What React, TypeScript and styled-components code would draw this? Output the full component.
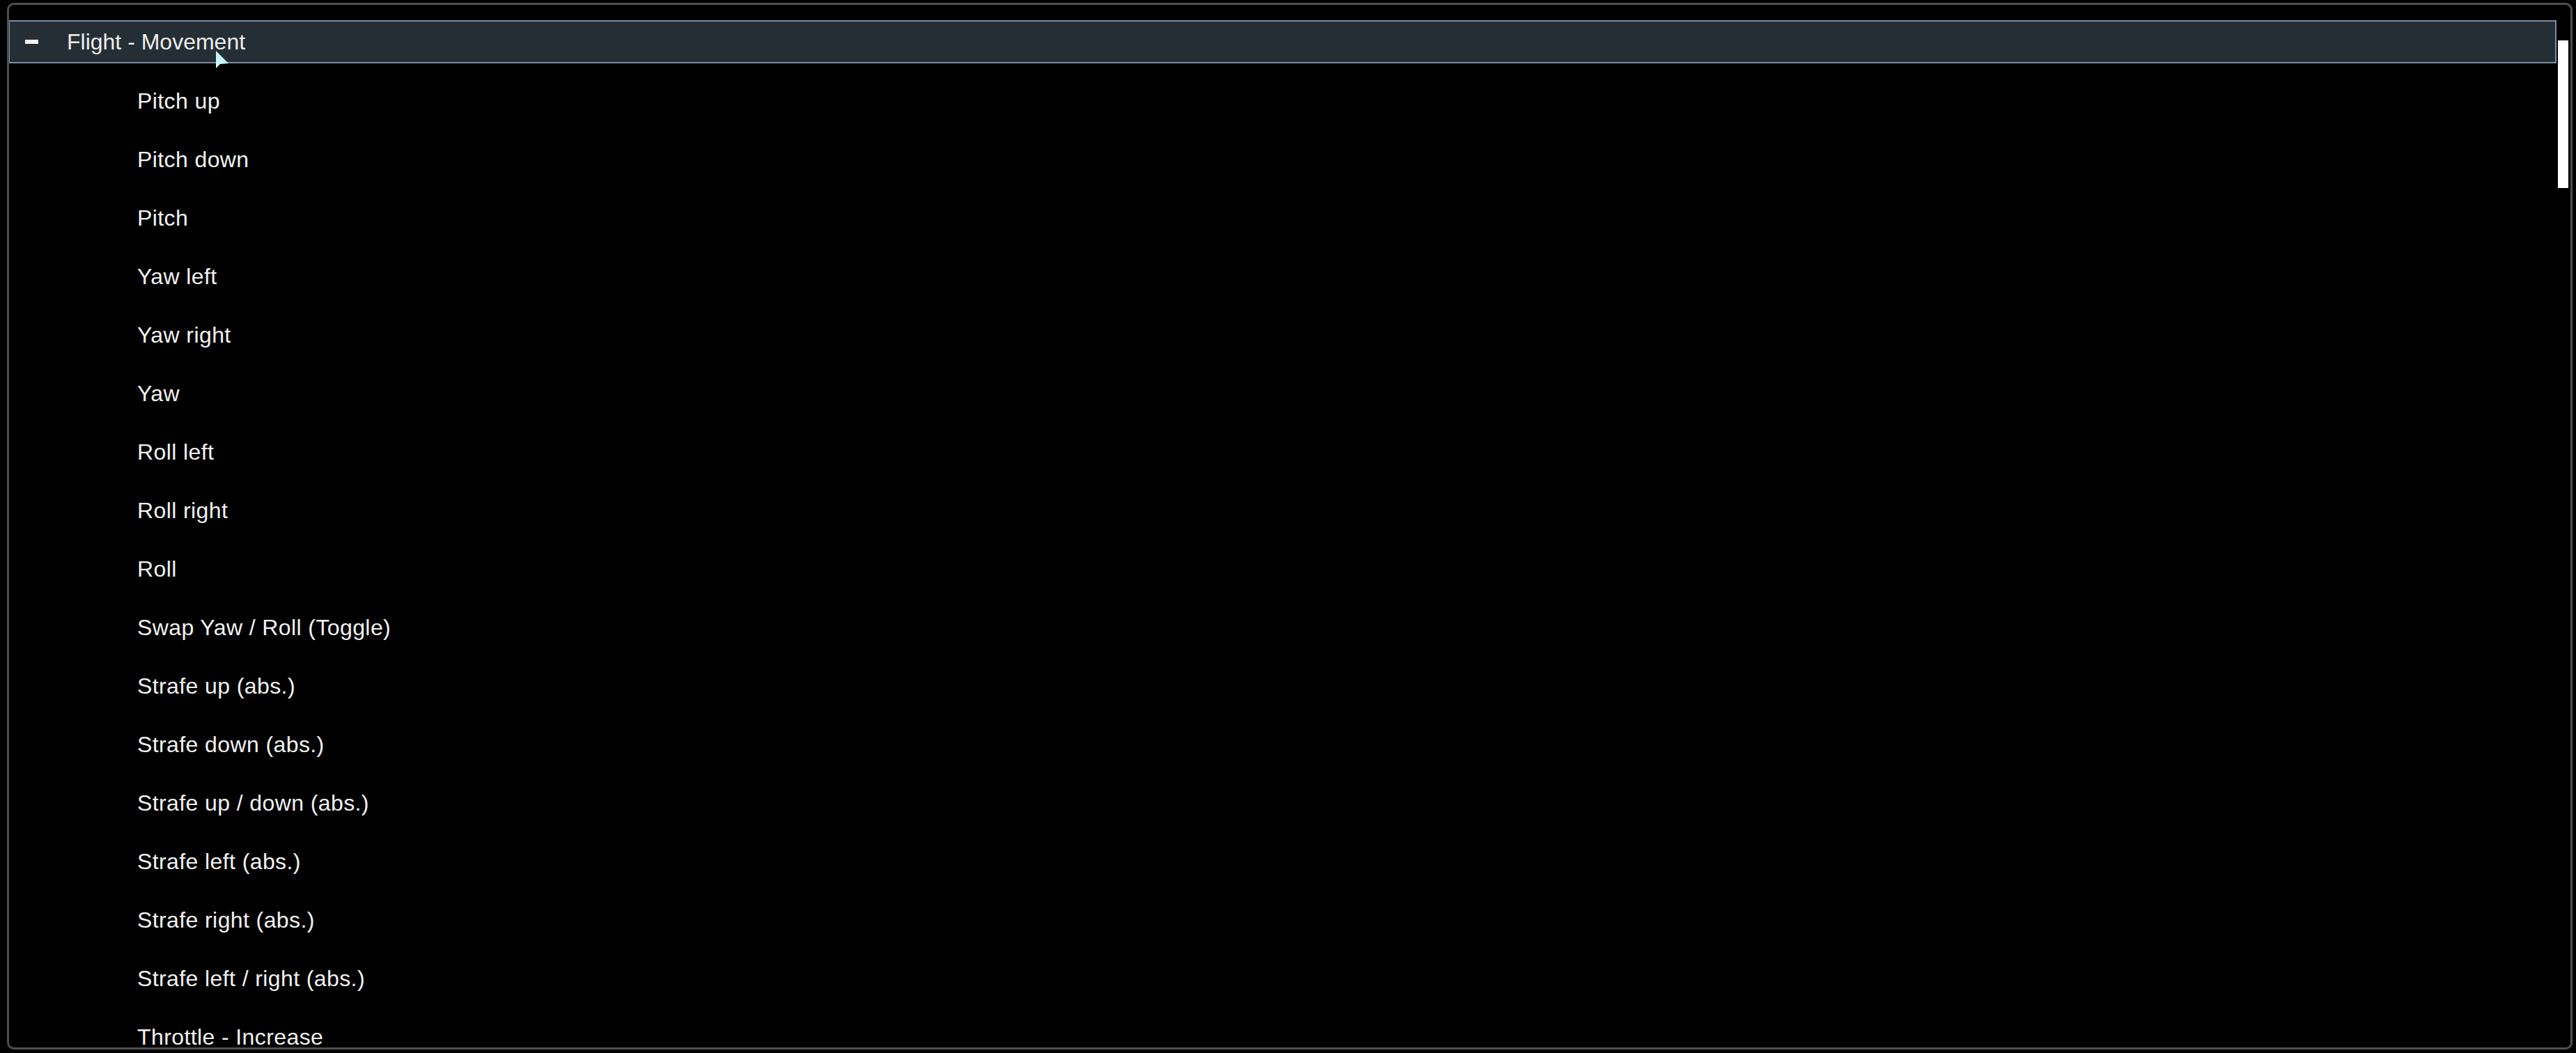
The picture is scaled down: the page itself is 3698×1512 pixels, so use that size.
import React from "react";
import styled, { createGlobalStyle } from "styled-components";

const GlobalStyle = createGlobalStyle`
  html, body {
    margin: 0;
    padding: 0;
    background: #000;
    width: 100%;
    height: 100%;
    overflow: hidden;
  }
  #root {
    height: 100%;
  }
  * { box-sizing: border-box; }
`;

const Page = styled.div`
  height: 1512px;
  padding: 4px 5px 5px 10px;
  background: #000;
  font-family: "Liberation Sans", Arial, sans-serif;
`;

const Frame = styled.div`
  position: relative;
  display: flex;
  height: 100%;
  border: 3px solid #4f4f4f;
  border-radius: 10px;
  overflow: hidden;
  background: #000;
`;

const List = styled.div`
  flex: 1;
  display: flex;
  flex-direction: column;
  padding-top: 22px;
  min-width: 0;
`;

const CategoryHeader = styled.div`
  display: flex;
  align-items: center;
  height: 62px;
  flex-shrink: 0;
  margin-left: -1px;
  border: 2px solid #7b8ea1;
  background: #252e34;
  color: #ededed;
  font-size: 32px;
  padding-left: 22px;
`;

const Minus = styled.span`
  display: block;
  width: 19px;
  height: 6px;
  background: #f4f4f4;
  margin-right: 41px;
`;

const Rows = styled.div`
  display: flex;
  flex-direction: column;
  padding-top: 12px;
`;

const Row = styled.div`
  display: flex;
  align-items: center;
  height: 84px;
  flex-shrink: 0;
  padding-left: 184px;
  color: #f2f2f2;
  font-size: 32px;
  letter-spacing: 0.4px;
  white-space: nowrap;
`;

const ScrollTrack = styled.div`
  width: 15px;
  margin-left: 2px;
  margin-right: 3px;
  padding-top: 51px;
  flex-shrink: 0;
`;

const Thumb = styled.div`
  width: 15px;
  height: 212px;
  background: #ffffff;
`;

const Cursor = styled.svg`
  position: absolute;
  left: 297px;
  top: 66px;
  width: 20px;
  height: 27px;
  pointer-events: none;
`;

const actions = [
  "Pitch up",
  "Pitch down",
  "Pitch",
  "Yaw left",
  "Yaw right",
  "Yaw",
  "Roll left",
  "Roll right",
  "Roll",
  "Swap Yaw / Roll (Toggle)",
  "Strafe up (abs.)",
  "Strafe down (abs.)",
  "Strafe up / down (abs.)",
  "Strafe left (abs.)",
  "Strafe right (abs.)",
  "Strafe left / right (abs.)",
  "Throttle - Increase",
];

export default function App() {
  return (
    <>
      <GlobalStyle />
      <Page>
        <Frame>
          <List>
            <CategoryHeader>
              <Minus />
              <span>Flight - Movement</span>
            </CategoryHeader>
            <Rows>
              {actions.map((a) => (
                <Row key={a}>{a}</Row>
              ))}
            </Rows>
          </List>
          <ScrollTrack>
            <Thumb />
          </ScrollTrack>
          <Cursor viewBox="0 0 20 27">
            <polygon points="0,0 0,25 6,19 18,18" fill="#c4f6fb" />
          </Cursor>
        </Frame>
      </Page>
    </>
  );
}
